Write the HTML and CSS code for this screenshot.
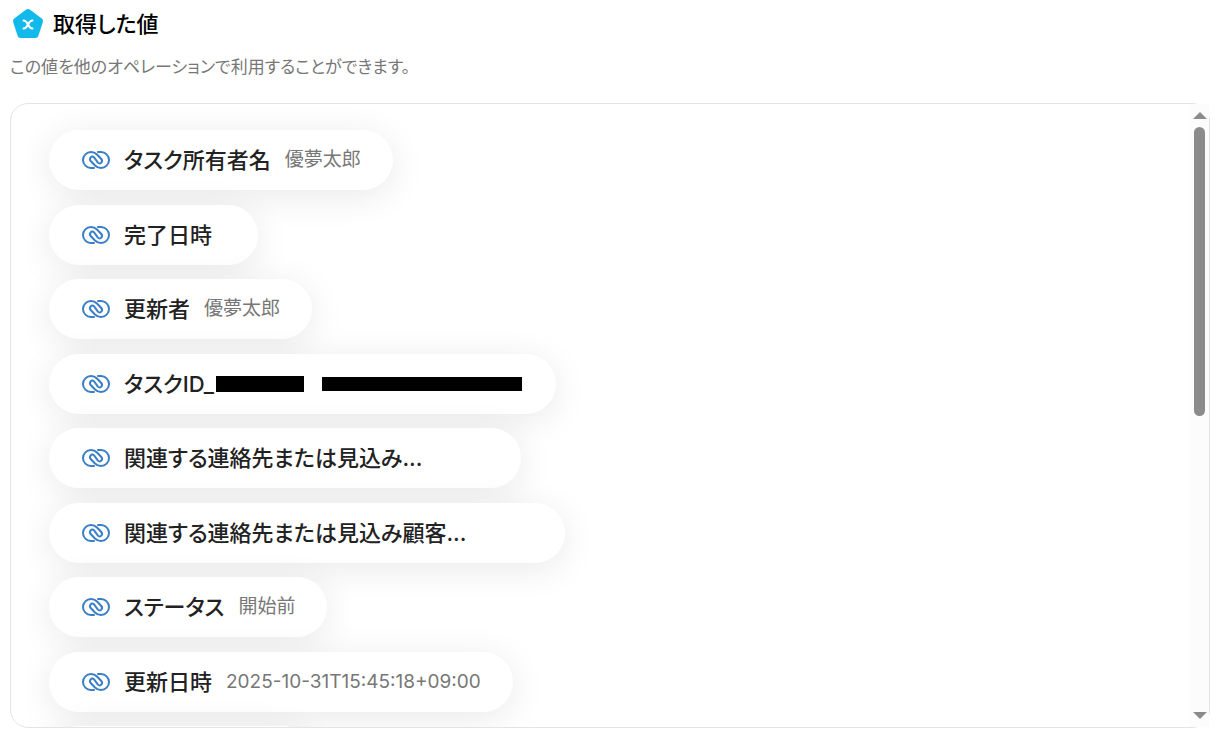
FILE: index.html
```
<!DOCTYPE html>
<html lang="ja">
  <head>
    <meta charset="UTF-8">
    <title>取得した値</title>
    <link rel="stylesheet" href="styles.css">
  </head>
  <body>
    <svg class="sprite" aria-hidden="true">
      <symbol id="link-icon" viewBox="0 0 28 18">
        <path d="M12 17H9A8 8 0 0 1 9 1C12 1 13.500 2 15 3.500L19.300 8C21.400 10.600 18.400 14 15.900 11.600L12.100 6.400C9.600 4 6.600 7.400 8.700 10L13 14.500C14.500 16 16 17 19 17A8 8 0 0 0 19 1H16" />
      </symbol>
    </svg>

    <header>
      <div class="heading">
        <svg class="logo" viewBox="0 0 32 32" aria-hidden="true">
          <path class="logo-shape" d="M16 4L28 13L23.500 27H8.500L4 13Z" />
          <path class="logo-x" d="M11.500 12.500c2 0 3 1 4.500 4s2.500 4 4.500 4M20.500 12.500c-2 0-3 1-4.500 4s-2.500 4-4.500 4" />
        </svg>
        <h1>取得した値</h1>
      </div>
      <p class="description">この値を他のオペレーションで利用することができます。</p>
    </header>

    <main class="panel">
      <ul class="values">
        <li class="pill">
          <svg class="icon"><use href="#link-icon" /></svg>
          <span class="label">タスク所有者名</span>
          <span class="value">優夢太郎</span>
        </li>
        <li class="pill">
          <svg class="icon"><use href="#link-icon" /></svg>
          <span class="label">完了日時</span>
          <span class="value"></span>
        </li>
        <li class="pill">
          <svg class="icon"><use href="#link-icon" /></svg>
          <span class="label">更新者</span>
          <span class="value">優夢太郎</span>
        </li>
        <li class="pill">
          <svg class="icon"><use href="#link-icon" /></svg>
          <span class="label">タスクID_<span class="mask mask-label"></span></span>
          <span class="value"><span class="mask mask-value"></span></span>
        </li>
        <li class="pill">
          <svg class="icon"><use href="#link-icon" /></svg>
          <span class="label">関連する連絡先または見込み...</span>
          <span class="value blank"></span>
        </li>
        <li class="pill">
          <svg class="icon"><use href="#link-icon" /></svg>
          <span class="label">関連する連絡先または見込み顧客...</span>
          <span class="value blank"></span>
        </li>
        <li class="pill">
          <svg class="icon"><use href="#link-icon" /></svg>
          <span class="label">ステータス</span>
          <span class="value">開始前</span>
        </li>
        <li class="pill">
          <svg class="icon"><use href="#link-icon" /></svg>
          <span class="label">更新日時</span>
          <span class="value">2025-10-31T15:45:18+09:00</span>
        </li>
        <li class="pill empty"></li>
      </ul>
      <div class="scrollbar" aria-hidden="true">
        <span class="arrow up"></span>
        <div class="track"><div class="thumb"></div></div>
        <span class="arrow down"></span>
      </div>
    </main>
  </body>
</html>
```
FILE: styles.css
```
* {
  box-sizing: border-box;
}

body {
  margin: 0;
  padding: 8px 10px 9px;
  height: 100vh;
  display: flex;
  flex-direction: column;
  background-color: #fff;
  font-family: Inter, "Noto Sans CJK JP", sans-serif;
  font-feature-settings: "palt";
  color: #222;
}

.sprite {
  display: none;
}

.heading {
  display: flex;
  align-items: center;
  gap: 9px;
  height: 32px;
  padding-left: 2px;
}

.logo {
  width: 32px;
  height: 32px;
}

.logo-shape {
  fill: #12baeb;
  stroke: #12baeb;
  stroke-width: 6;
  stroke-linejoin: round;
}

.logo-x {
  fill: none;
  stroke: #fff;
  stroke-width: 2;
  stroke-linecap: round;
}

h1 {
  margin: 0;
  font-size: 22px;
  font-weight: 500;
  line-height: 32px;
  color: #000;
}

.description {
  margin: 15px 0 23px;
  font-size: 17px;
  line-height: 25px;
  color: #777;
}

.panel {
  flex: 1;
  min-height: 0;
  display: flex;
  border: 1px solid #e4e4e4;
  border-radius: 18px;
}

.values {
  flex: 1;
  margin: 0;
  padding: 26px 38px 0;
  list-style: none;
  display: flex;
  flex-direction: column;
  align-items: flex-start;
  overflow: hidden;
  border-radius: 17px 0 0 17px;
}

.pill {
  display: flex;
  align-items: center;
  flex-shrink: 0;
  height: 60px;
  margin-bottom: 14px;
  padding: 0 32px 0 33px;
  border-radius: 30px;
  background-color: #fff;
  box-shadow: 0 6px 36px rgba(0, 0, 0, 0.09);
}

.pill:nth-child(odd) {
  margin-bottom: 15px;
}

.pill.empty {
  width: 264px;
}

.icon {
  width: 28px;
  height: 18px;
  margin-right: 14px;
  fill: none;
  stroke: #3a7ec4;
  stroke-width: 2;
  stroke-linecap: round;
}

.label {
  display: flex;
  align-items: center;
  font-size: 22px;
  font-weight: 500;
  line-height: 32px;
}

.value {
  margin-left: 14px;
  font-size: 19px;
  line-height: 28px;
  color: #777;
}

.value.blank {
  width: 53px;
}

.mask {
  display: block;
  margin: 0 2px;
  background-color: #000;
}

.mask-label {
  width: 88px;
  height: 16px;
}

.mask-value {
  width: 200px;
  height: 14px;
}

.scrollbar {
  width: 19px;
  padding: 8px 0;
  display: flex;
  flex-direction: column;
  align-items: center;
  gap: 8px;
  background-color: #fcfcfc;
}

.arrow {
  border: 7px solid transparent;
}

.up {
  border-top: 0;
  border-bottom-color: #8b8b8b;
}

.down {
  border-bottom: 0;
  border-top-color: #8b8b8b;
}

.track {
  flex: 1;
}

.thumb {
  width: 11px;
  height: 50%;
  border-radius: 6px;
  background-color: #8b8b8b;
}
```
